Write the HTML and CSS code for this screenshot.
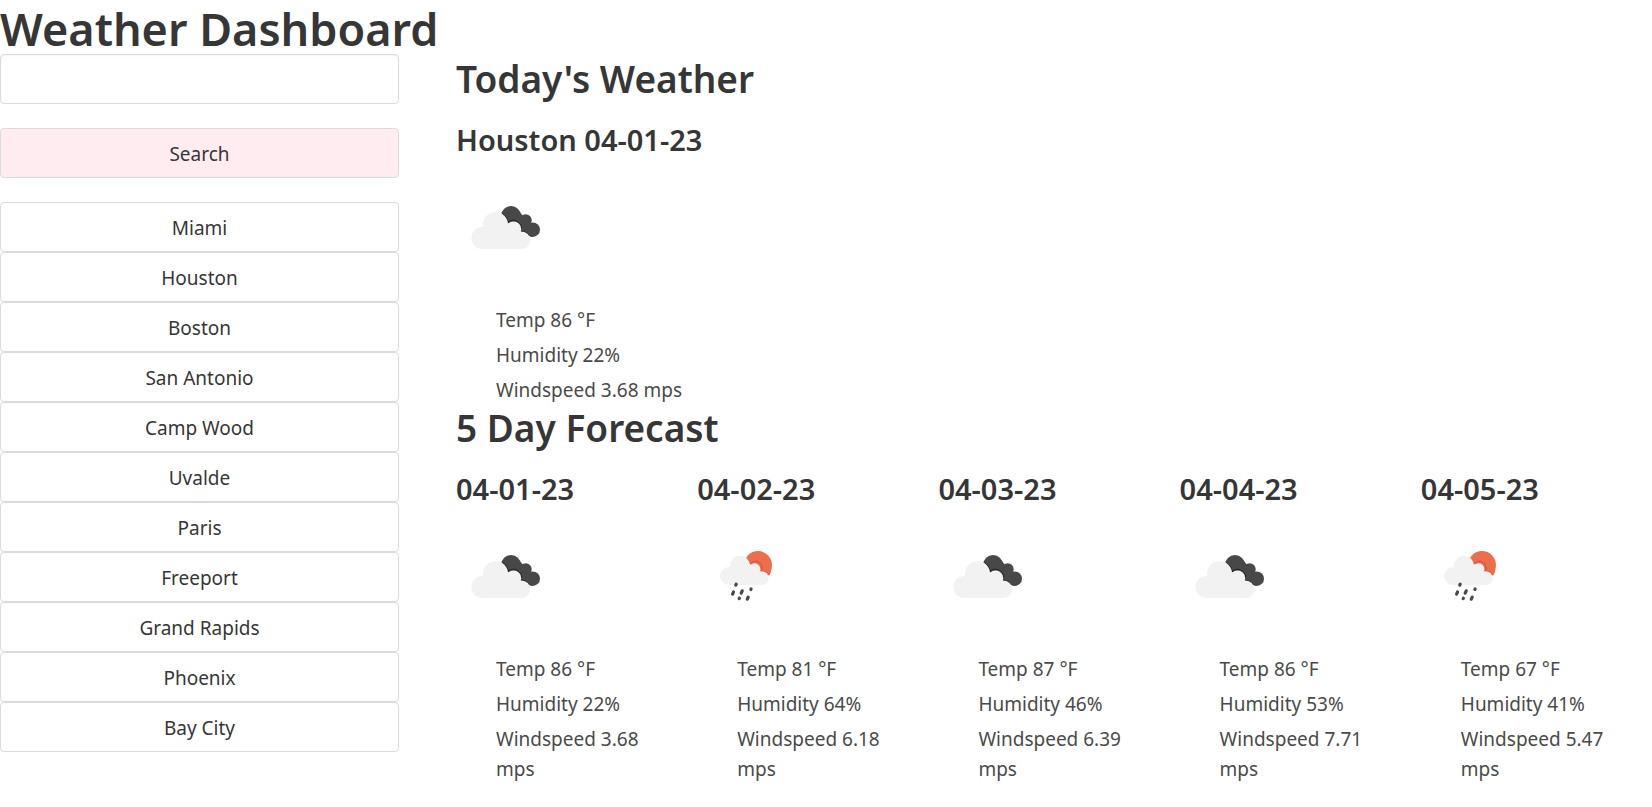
FILE: index.html
```html
<!DOCTYPE html>
<html lang="en">
<head>
<meta charset="utf-8">
<meta name="viewport" content="width=device-width, initial-scale=1">
<title>Weather Dashboard</title>
<link rel="stylesheet" href="styles.css">
</head>
<body>
<svg class="sprite" aria-hidden="true">
  <symbol id="clouds" viewBox="0 0 100 100">
    <g fill="#484849">
      <circle cx="55" cy="39" r="10"/>
      <circle cx="69.7" cy="43.3" r="6"/>
      <circle cx="76.7" cy="52.7" r="7.3"/>
      <path d="M47 37L63 34L73 46L76 60L66 56L56 48Z"/>
    </g>
    <g fill="none" stroke="#222223" stroke-width="1">
      <path d="M45.8 36.2A12.5 12.5 0 0 1 52.2 46.2"/>
      <path d="M52 45.5A8 8 0 0 1 65 54"/>
      <path d="M65 54.4A9 9 0 0 1 73 58.6"/>
    </g>
    <g fill="#f2f2f2">
      <circle cx="26.4" cy="61" r="11"/>
      <circle cx="39.5" cy="47.5" r="12.5"/>
      <circle cx="57.5" cy="52.3" r="7.8"/>
      <circle cx="65.5" cy="63.2" r="8.8"/>
      <path d="M26.4 50L52 46L65 56L66 72H26.4Z"/>
    </g>
  </symbol>
  <symbol id="rain" viewBox="0 0 100 100">
    <circle cx="61" cy="39.1" r="14" fill="#ec6e4c"/>
    <path d="M74.3 43.5Q74.2 46.5 72.6 49.3L66 50L64 42Z" fill="#ec6e4c"/>
    <g fill="none" stroke="#d4512f" stroke-width="1">
      <path d="M49.4 32.6A9.8 9.8 0 0 1 53.2 38.5"/>
      <path d="M53.2 38A5.9 5.9 0 0 1 63.8 45.6"/>
      <path d="M63.5 45.4Q68.5 44.2 71.6 48.4"/>
    </g>
    <g fill="#f2f2f2">
      <circle cx="32" cy="50" r="9"/>
      <circle cx="43" cy="39.8" r="10.1"/>
      <circle cx="57.5" cy="43.2" r="5.9"/>
      <circle cx="64.8" cy="52.2" r="6.9"/>
      <path d="M32 41L53 38L64 46L65 59H32Z"/>
    </g>
    <g stroke="#484849" stroke-width="3.2" stroke-linecap="round">
      <path d="M39.2 58.2L38.8 59.2"/>
      <path d="M36.5 66L35.6 68.2"/>
      <path d="M45.2 64.8L44.2 67.2"/>
      <path d="M54.1 63L53.9 63.6"/>
      <path d="M42.4 72.2L42.2 72.6"/>
      <path d="M51.2 71.2L50.3 73.2"/>
    </g>
  </symbol>
</svg>

<header>
  <h1 class="page-title">Weather Dashboard</h1>
</header>

<div class="layout">
  <aside class="sidebar">
    <form class="search">
      <input class="control" type="text" aria-label="City">
      <button class="control control-search" type="button">Search</button>
    </form>
    <div class="history">
      <button class="control" type="button">Miami</button>
      <button class="control" type="button">Houston</button>
      <button class="control" type="button">Boston</button>
      <button class="control" type="button">San Antonio</button>
      <button class="control" type="button">Camp Wood</button>
      <button class="control" type="button">Uvalde</button>
      <button class="control" type="button">Paris</button>
      <button class="control" type="button">Freeport</button>
      <button class="control" type="button">Grand Rapids</button>
      <button class="control" type="button">Phoenix</button>
      <button class="control" type="button">Bay City</button>
    </div>
  </aside>

  <main class="content">
    <section>
      <h2 class="section-title">Today's Weather</h2>
      <h3 class="day-title">Houston 04-01-23</h3>
      <svg class="icon" role="img" aria-label="Broken clouds"><use href="#clouds"/></svg>
      <ul class="stats">
        <li>Temp 86 °F</li>
        <li>Humidity 22%</li>
        <li>Windspeed 3.68 mps</li>
      </ul>
    </section>

    <section>
      <h2 class="section-title">5 Day Forecast</h2>
      <div class="forecast">
        <article>
          <h3 class="day-title">04-01-23</h3>
          <svg class="icon" role="img" aria-label="Broken clouds"><use href="#clouds"/></svg>
          <ul class="stats">
            <li>Temp 86 °F</li>
            <li>Humidity 22%</li>
            <li>Windspeed 3.68 mps</li>
          </ul>
        </article>
        <article>
          <h3 class="day-title">04-02-23</h3>
          <svg class="icon" role="img" aria-label="Rain"><use href="#rain"/></svg>
          <ul class="stats">
            <li>Temp 81 °F</li>
            <li>Humidity 64%</li>
            <li>Windspeed 6.18 mps</li>
          </ul>
        </article>
        <article>
          <h3 class="day-title">04-03-23</h3>
          <svg class="icon" role="img" aria-label="Broken clouds"><use href="#clouds"/></svg>
          <ul class="stats">
            <li>Temp 87 °F</li>
            <li>Humidity 46%</li>
            <li>Windspeed 6.39 mps</li>
          </ul>
        </article>
        <article>
          <h3 class="day-title">04-04-23</h3>
          <svg class="icon" role="img" aria-label="Broken clouds"><use href="#clouds"/></svg>
          <ul class="stats">
            <li>Temp 86 °F</li>
            <li>Humidity 53%</li>
            <li>Windspeed 7.71 mps</li>
          </ul>
        </article>
        <article>
          <h3 class="day-title">04-05-23</h3>
          <svg class="icon" role="img" aria-label="Rain"><use href="#rain"/></svg>
          <ul class="stats">
            <li>Temp 67 °F</li>
            <li>Humidity 41%</li>
            <li>Windspeed 5.47 mps</li>
          </ul>
        </article>
      </div>
    </section>
  </main>
</div>
</body>
</html>
```

FILE: styles.css
```css
*,
*::before,
*::after {
  box-sizing: border-box;
}

body {
  margin: 0;
  background: #fff;
  color: #4a4a4a;
  font-family: "Segoe UI", "Noto Sans", "Open Sans", sans-serif;
  font-size: 19px;
  line-height: 30px;
}

h1,
h2,
h3,
ul {
  margin: 0;
  padding: 0;
}

.sprite {
  display: none;
}

.page-title,
.section-title,
.day-title {
  color: #363636;
  font-weight: 600;
}

.page-title {
  padding-top: 4px;
  font-size: 45px;
  line-height: 50px;
}

.section-title {
  margin-bottom: 22px;
  font-size: 37px;
  line-height: 45px;
}

.day-title {
  margin-bottom: 20px;
  font-size: 29px;
  line-height: 34px;
}

.layout {
  display: grid;
  grid-template-columns: minmax(0, 1fr) minmax(0, 3fr);
}

.sidebar {
  padding-right: 14px;
}

.search {
  display: grid;
  gap: 24px;
  margin-bottom: 24px;
}

.history {
  display: grid;
}

.control {
  display: block;
  width: 100%;
  height: 50px;
  padding: 2px 20px 0;
  border: 1px solid #dbdbdb;
  border-radius: 4px;
  background: #fff;
  color: #363636;
  font: inherit;
  text-align: center;
}

input.control {
  box-shadow: inset 0 1px 2px rgba(10, 10, 10, 0.05);
  text-align: left;
}

.control-search {
  background: #feecf0;
}

.content {
  padding: 2px 20px 0 43px;
}

.forecast {
  display: grid;
  grid-template-columns: repeat(5, minmax(0, 1fr));
  column-gap: 30px;
}

.icon {
  display: block;
  width: 100px;
  height: 100px;
  margin-bottom: 28px;
}

.stats {
  display: grid;
  row-gap: 5px;
  padding-left: 40px;
  list-style: none;
}
```
